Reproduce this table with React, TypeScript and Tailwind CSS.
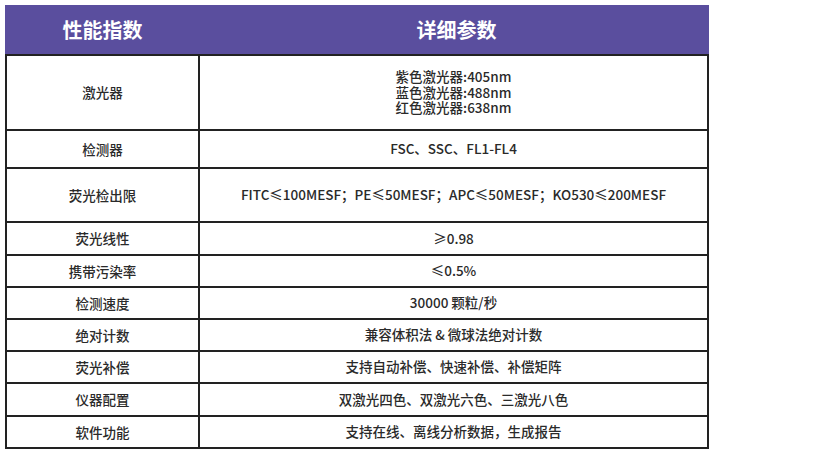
import React from 'react';

interface SpecRow {
    name: string;
    value: string;
    height: string;
}

const rows: SpecRow[] = [
    { name: '激光器', value: '紫色激光器:405nm\n蓝色激光器:488nm\n红色激光器:638nm', height: 'h-[75px]' },
    { name: '检测器', value: 'FSC、SSC、FL1-FL4', height: 'h-[38px]' },
    { name: '荧光检出限', value: 'FITC≤100MESF；PE≤50MESF；APC≤50MESF；KO530≤200MESF', height: 'h-[54px]' },
    { name: '荧光线性', value: '≥0.98', height: 'h-[33px]' },
    { name: '携带污染率', value: '≤0.5%', height: 'h-[32px]' },
    { name: '检测速度', value: '30000 颗粒/秒', height: 'h-[32px]' },
    { name: '绝对计数', value: '兼容体积法 & 微球法绝对计数', height: 'h-[32px]' },
    { name: '荧光补偿', value: '支持自动补偿、快速补偿、补偿矩阵', height: 'h-[32px]' },
    { name: '仪器配置', value: '双激光四色、双激光六色、三激光八色', height: 'h-[33px]' },
    { name: '软件功能', value: '支持在线、离线分析数据，生成报告', height: 'h-[32px]' },
];

const App: React.FC = () => {
    return (
        <div className="w-[820px] h-[459px] bg-white pt-[5px] pl-[5px] font-['Noto_Sans_CJK_SC','Noto_Sans',sans-serif]">
            <div className="w-[704px]">
                {/* header band */}
                <div className="flex h-[49px] bg-[#5a4e9e] text-white text-[20px] font-bold">
                    <div className="w-[195px] flex items-center justify-center">性能指数</div>
                    <div className="flex-1 flex items-center justify-center pl-[4px]">详细参数</div>
                </div>

                <div className="border-x-2 border-b-2 border-[#222]">
                    {rows.map((row) => (
                        <div key={row.name} className={`flex border-t-2 border-[#222] ${row.height}`}>
                            <div className="w-[193px] border-r-2 border-[#222] flex items-center justify-center text-[13.5px] font-medium text-[#2a2a2a]">
                                {row.name}
                            </div>
                            <div className="flex-1 flex items-center justify-center text-center whitespace-pre-line leading-[15.5px] text-[13.5px] font-medium text-[#2a2a2a]">
                                {row.value}
                            </div>
                        </div>
                    ))}
                </div>
            </div>
        </div>
    );
};

export default App;
